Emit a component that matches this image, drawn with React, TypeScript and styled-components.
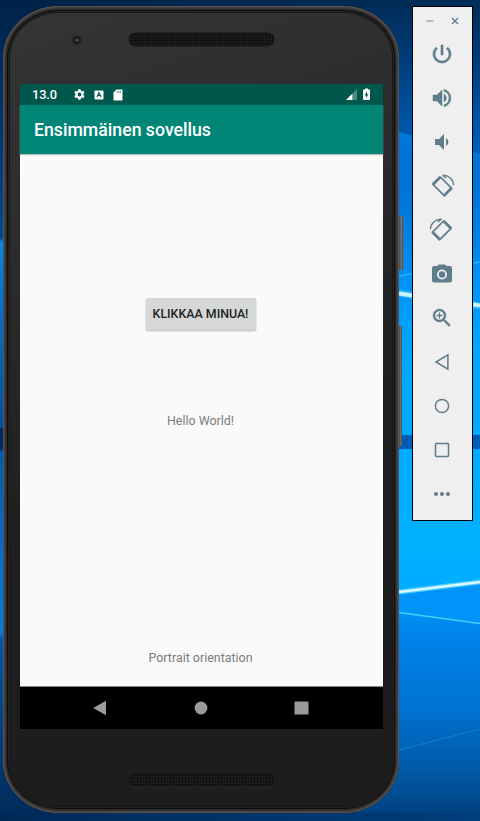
import React from "react";
import styled, { createGlobalStyle } from "styled-components";

const GlobalStyle = createGlobalStyle`
  * { box-sizing: border-box; }
  body { margin: 0; overflow: hidden; background: #0078d7; font-family: Roboto, "Noto Sans", sans-serif; }
`;

const Desktop = styled.main`
  position: relative;
  display: flex;
  align-items: flex-start;
  width: 480px;
  height: 821px;
  padding: 6px 7px 0 3px;
  overflow: hidden;
`;

const Wallpaper = styled.svg`
  position: absolute;
  inset: 0;
`;

const Phone = styled.section`
  position: relative;
  display: flex;
  flex: none;
  flex-direction: column;
  width: 396px;
  height: 807px;
  padding: 0 16px 0 17px;
  border-radius: 56px / 52px;
  background: linear-gradient(160deg, #353536 0%, #2b2b2b 28%, #1e1e1e 58%, #1d1d1d 100%);
  box-shadow:
    inset 0 0 0 1px #575152,
    inset 0 0 0 2px #454040,
    inset 0 0 0 3px #393535,
    inset 0 0 0 4px #2a2828,
    inset 0 0 0 5px #0d0d0d,
    inset 0 0 0 6px #252525,
    inset 0 0 0 7px #181818;
`;

const SideKey = styled.span<{ $top: number; $height: number; $width: number }>`
  position: absolute;
  left: 396px;
  top: ${(p) => p.$top}px;
  width: ${(p) => p.$width}px;
  height: ${(p) => p.$height}px;
  background: linear-gradient(90deg, #4e4848, #777171 65%, #494545);
`;

const Bezel = styled.div<{ $height: number }>`
  position: relative;
  display: flex;
  flex: none;
  justify-content: center;
  height: ${(p) => p.$height}px;
`;

const Speaker = styled.span<{ $top: number }>`
  width: 145px;
  height: 13px;
  margin: ${(p) => p.$top}px 1px 0 0;
  border-radius: 7px;
  background: radial-gradient(circle, #080808 0.8px, transparent 1.1px) 1px 0 / 3px 3px, #1b1b1b;
  box-shadow: 0 0 0 0.5px #151515, 0.5px 1px 0 #353535;
`;

const Camera = styled.span`
  position: absolute;
  left: 49px;
  top: 26px;
  width: 15px;
  height: 15px;
  border-radius: 50%;
  background: radial-gradient(circle at 53% 54%, #6a5662 0 0.6px, #2a222a 1.6px, #191719 3.6px, #303031 5px, #303031 7px);
`;

const Screen = styled.div`
  display: flex;
  flex: none;
  flex-direction: column;
  height: 645px;
  background: #fafafa;
`;

const StatusBar = styled.div`
  display: flex;
  align-items: center;
  height: 21px;
  padding: 0 13px 0 12px;
  background: #00574b;
  color: #fff;
`;

const Clock = styled.span`
  width: 41px;
  font-size: 12.8px;
  font-weight: 500;
  line-height: 21px;
  letter-spacing: -0.1px;
`;

const StatusIcons = styled.div<{ $gap: number; $end?: boolean }>`
  display: flex;
  align-items: center;
  gap: ${(p) => p.$gap}px;
  margin-left: ${(p) => (p.$end ? "auto" : "0")};
`;

const AppBar = styled.header`
  z-index: 1;
  height: 49px;
  padding-left: 14px;
  background: #008577;
  color: #fff;
  font-size: 17.7px;
  font-weight: 500;
  line-height: 51px;
  box-shadow: 0 1px 1px #aebfbd;
`;

const Content = styled.div`
  display: flex;
  flex: 1;
  flex-direction: column;
  align-items: center;
  padding: 144px 2px 0 0;
  border-bottom: 1px solid #858585;
`;

const PushButton = styled.button`
  flex: none;
  width: 110px;
  height: 32px;
  padding: 0;
  border: 0;
  border-radius: 2px;
  background: #d6d7d7;
  box-shadow: 0 1px 2px rgba(0, 0, 0, 0.28);
  color: #222;
  font: 500 12.4px/32px Roboto, sans-serif;
  white-space: nowrap;
`;

const Label = styled.p<{ $gap: number }>`
  margin: ${(p) => p.$gap}px 0 0;
  color: #7c7c7c;
  font-size: 12.45px;
  line-height: 16px;
  white-space: nowrap;
`;

const NavBar = styled.nav`
  display: flex;
  flex: none;
  align-items: center;
  justify-content: space-between;
  height: 42px;
  padding: 0 74px 0 72px;
  background: #000;
`;

const Toolbar = styled.aside`
  position: relative;
  display: flex;
  flex: none;
  flex-direction: column;
  align-items: center;
  width: 61px;
  height: 515px;
  margin-left: 13px;
  border: 1px solid #000;
  background: #efefef;
  color: #607d8b;
`;

const WindowControls = styled.div`
  display: flex;
  flex: none;
  align-items: center;
  justify-content: center;
  gap: 15px;
  width: 100%;
  height: 25px;
  padding: 3px 0 0 0;
`;

const Tool = styled.div`
  display: grid;
  flex: none;
  place-items: center;
  width: 45px;
  height: 44px;
  margin-right: 2px;
`;

const Glyph = styled.svg`
  display: block;
  overflow: visible;
`;

const rotate = (
  <>
    <path fillRule="evenodd" d="M8.4 1.9 1.9 8.4Q.9 9.5 1.9 10.5L13 21.7Q14 22.6 15.1 21.6L21.6 15.1Q22.6 14 21.6 13L10.5 1.9Q9.5 .9 8.4 1.9zM10.3 4.1 19.4 13.3 13.3 19.4 4.1 10.3z" />
    <path d="M12 .7C18 .3 23 5 23.1 10.8M12 .7 15.6 3.4" fill="none" stroke="currentColor" strokeWidth="1.4" />
  </>
);

const tools: { name: string; shape: React.ReactNode }[] = [
  { name: "Power", shape: <path d="M13 3h-2v10h2V3zm4.83 2.17-1.42 1.42A6.92 6.92 0 0 1 19 12a7 7 0 1 1-11.42-5.42L6.17 5.17A9 9 0 1 0 21 12c0-2.74-1.23-5.18-3.17-6.83z" stroke="currentColor" strokeWidth=".6" /> },
  { name: "Volume up", shape: <path d="M3 9v6h4l5 5V4L7 9H3zm13.5 3A4.5 4.5 0 0 0 14 7.97v8.05A4.5 4.5 0 0 0 16.5 12zM14 3.23v2.06a7 7 0 0 1 0 13.42v2.06a9 9 0 0 0 0-17.54z" stroke="currentColor" strokeWidth=".5" /> },
  { name: "Volume down", shape: <path d="M18.5 12A4.5 4.5 0 0 0 16 7.97v8.05A4.5 4.5 0 0 0 18.5 12zM5 9v6h4l5 5V4L9 9H5z" /> },
  { name: "Rotate left", shape: <g transform="translate(0.5 0.5)">{rotate}</g> },
  { name: "Rotate right", shape: <g transform="matrix(-1 0 0 1 23.5 0.5)">{rotate}</g> },
  { name: "Screenshot", shape: <path fillRule="evenodd" d="M9 2.5 7.17 4H4a2 2 0 0 0-2 2v12.5a2 2 0 0 0 2 2h16a2 2 0 0 0 2-2V6a2 2 0 0 0-2-2h-3.17L15 2.5H9zm3 15a5 5 0 1 1 0-10 5 5 0 0 1 0 10zm0-1.8a3.2 3.2 0 1 0 0-6.4 3.2 3.2 0 0 0 0 6.4z" /> },
  { name: "Zoom", shape: <path d="m15.5 14h-.79l-.28-.27A6.5 6.5 0 1 0 13.73 14.43l.27.28v.79l5 4.99L20.49 19l-4.99-5zm-6 0a4.5 4.5 0 1 1 0-9 4.5 4.5 0 0 1 0 9zm2.8-4H10v2.3H9V10H6.7V9H9V6.7h1V9h2.3v1z" stroke="currentColor" strokeWidth=".35" /> },
  { name: "Back", shape: <path d="M17.9 4.9v14.2L6 12z" fill="none" stroke="currentColor" strokeWidth="1.5" /> },
  { name: "Home", shape: <circle cx="12" cy="12" r="6.6" fill="none" stroke="currentColor" strokeWidth="1.5" /> },
  { name: "Overview", shape: <rect x="5.5" y="5.5" width="13" height="13" rx=".7" fill="none" stroke="currentColor" strokeWidth="1.5" /> },
  { name: "More", shape: <path d="M6 10a2 2 0 1 0 0 4 2 2 0 0 0 0-4zm6 0a2 2 0 1 0 0 4 2 2 0 0 0 0-4zm6 0a2 2 0 1 0 0 4 2 2 0 0 0 0-4z" /> },
];

function Background() {
  return (
    <Wallpaper width="480" height="821" viewBox="0 0 480 821">
      <defs>
        <linearGradient id="right" x1="0" y1="0" x2="0" y2="1">
          <stop offset="0" stopColor="#002b55" />
          <stop offset=".07" stopColor="#003b78" />
          <stop offset=".16" stopColor="#0058ad" />
          <stop offset=".25" stopColor="#0075d8" />
          <stop offset=".34" stopColor="#0093f4" />
          <stop offset=".42" stopColor="#00a5ff" />
          <stop offset=".66" stopColor="#00b0ff" />
          <stop offset=".72" stopColor="#00acff" />
          <stop offset=".755" stopColor="#008bf0" />
          <stop offset=".8" stopColor="#007de2" />
          <stop offset=".86" stopColor="#0074d4" />
          <stop offset=".94" stopColor="#0059a5" />
          <stop offset="1" stopColor="#003d79" />
        </linearGradient>
        <linearGradient id="left" x1="0" y1="0" x2="0" y2="1">
          <stop offset="0" stopColor="#002248" />
          <stop offset=".16" stopColor="#003570" />
          <stop offset=".29" stopColor="#004a91" />
          <stop offset=".295" stopColor="#0088ee" />
          <stop offset=".38" stopColor="#0070cc" />
          <stop offset=".52" stopColor="#00529c" />
          <stop offset=".522" stopColor="#002c59" />
          <stop offset=".547" stopColor="#002c59" />
          <stop offset=".55" stopColor="#005bb3" />
          <stop offset=".77" stopColor="#007ee4" />
          <stop offset=".78" stopColor="#0059a9" />
          <stop offset=".9" stopColor="#003d7b" />
          <stop offset="1" stopColor="#002a58" />
        </linearGradient>
        <linearGradient id="top" x1="0" y1="0" x2="1" y2="0">
          <stop offset="0" stopColor="#002248" />
          <stop offset="1" stopColor="#002d5a" />
        </linearGradient>
        <linearGradient id="edge" x1="0" y1="0" x2="1" y2="0">
          <stop offset="0" stopColor="#002956" />
          <stop offset="1" stopColor="#003e7c" />
        </linearGradient>
        <linearGradient id="ray" x1="0" y1="0" x2="0" y2="1">
          <stop offset="0" stopColor="#0080e8" stopOpacity=".8" />
          <stop offset="1" stopColor="#0080e8" stopOpacity="0" />
        </linearGradient>
      </defs>
      <path fill="url(#right)" d="M0 0h480v821H0z" />
      <path fill="url(#left)" d="M0 0h200v821H0z" />
      <path fill="url(#top)" d="M0 0h480v8H0z" />
      <path fill="url(#edge)" d="M0 812h480v9H0z" />
      <path fill="url(#ray)" d="m399 132 81 22v86h-81z" />
      <path stroke="#1caaff" strokeWidth="2" d="m399 276 81-14" />
      <path stroke="#50caff" strokeWidth="7" opacity=".5" d="m399 293 81 13" />
      <path stroke="#c4f5ff" strokeWidth="4" d="m399 293.5 81 12" />
      <path fill="#005db5" d="M399 435h81v14h-81z" />
      <path fill="#0094f8" d="m399 594 81-10v40l-81-11z" />
      <path stroke="#4bcbff" strokeWidth="5" d="m399 592 81-10" />
      <path stroke="#d7fbff" strokeWidth="2.5" d="m399 592 81-10" />
      <path stroke="#42cfff" strokeWidth="1.5" d="m399 612.5 81 11" />
      <path stroke="#1380d2" strokeWidth="1" d="m399 750 81-21" />
    </Wallpaper>
  );
}

export default function App() {
  return (
    <>
      <GlobalStyle />
      <Desktop>
        <Background />
        <Phone>
          <SideKey $top={210} $height={54} $width={4} />
          <SideKey $top={320} $height={120} $width={3} />
          <Bezel $height={78}>
            <Camera />
            <Speaker $top={27} />
          </Bezel>
          <Screen>
            <StatusBar>
              <Clock>13.0</Clock>
              <StatusIcons $gap={8}>
                <Glyph width="13" height="13" viewBox="1 1 22 22" fill="currentColor">
                  <path fillRule="evenodd" d="M19.4 13a8 8 0 0 0 0-2l2.1-1.7-2-3.5-2.5 1a8 8 0 0 0-1.7-1L15 3.1h-4l-.6 2.7-1.7 1-2.5-1-2 3.5L6.4 11a8 8 0 0 0 0 2l-2.2 1.7 2 3.5 2.5-1 1.7 1 .6 2.7h4l.3-2.7 1.7-1 2.5 1 2-3.5zM13 15.2a3.2 3.2 0 1 1 0-6.4 3.2 3.2 0 0 1 0 6.4z" transform="translate(-1 0)" />
                </Glyph>
                <Glyph width="10" height="10" viewBox="0 0 10 10">
                  <rect x=".5" y=".5" width="9" height="9" rx="1" fill="#fff" />
                  <path d="m3 7 2-4.5L7 7M3.8 5.5h2.4" fill="none" stroke="#00574b" strokeWidth="1.1" />
                </Glyph>
                <Glyph width="12" height="12" viewBox="0 0 12 12">
                  <path fill="#fff" d="M4.5.5h5.2q.8 0 .8.8v9.4q0 .8-.8.8H2.3q-.8 0-.8-.8V3.5z" />
                  <path stroke="#00574b" strokeWidth=".7" d="M5 2v1.7M6.7 2v1.7M8.4 2v1.7" />
                </Glyph>
              </StatusIcons>
              <StatusIcons $gap={6} $end>
                <Glyph width="11" height="11" viewBox="0 0 11 11">
                  <path fill="#4e8c83" d="M11 0v11H0z" />
                  <path fill="#fff" d="M6.3 4.7V11H0z" />
                </Glyph>
                <Glyph width="7" height="12" viewBox="0 .8 7 12">
                  <path fill="#fff" d="M2 .3h3v1h1.2q.8 0 .8.8v8.8q0 .8-.8.8H.8q-.8 0-.8-.8V2.1q0-.8.8-.8H2z" />
                  <path fill="#00574b" d="M4 3 1.7 7h1.5v3l2.2-4H4z" />
                </Glyph>
              </StatusIcons>
            </StatusBar>
            <AppBar>Ensimmäinen sovellus</AppBar>
            <Content>
              <PushButton>KLIKKAA MINUA!</PushButton>
              <Label $gap={83}>Hello World!</Label>
              <Label $gap={221}>Portrait orientation</Label>
            </Content>
            <NavBar>
              <Glyph width="15" height="16" viewBox="0 0 15 16"><path fill="#9b9b9b" d="M14 .7v14.6L1.2 8z" /></Glyph>
              <Glyph width="14" height="14" viewBox="0 0 14 14"><circle cx="7" cy="7" r="6.4" fill="#9b9b9b" /></Glyph>
              <Glyph width="15" height="14" viewBox="0 0 15 14"><rect x=".5" y=".5" width="14" height="13" rx=".6" fill="#9b9b9b" /></Glyph>
            </NavBar>
          </Screen>
          <Bezel $height={84}>
            <Speaker $top={45} />
          </Bezel>
        </Phone>
        <Toolbar>
          <WindowControls>
            <Glyph width="10" height="10" viewBox="0 0 10 10"><path stroke="#9db0b9" strokeWidth="1.6" d="M1.5 5h7" /></Glyph>
            <Glyph width="10" height="10" viewBox="0 0 10 10"><path stroke="#607d8b" strokeWidth="1.4" d="m2 2 6 6m0-6-6 6" /></Glyph>
          </WindowControls>
          {tools.map((tool) => (
            <Tool key={tool.name}>
              <Glyph width="24" height="24" viewBox="0 0 24 24" fill="currentColor">{tool.shape}</Glyph>
            </Tool>
          ))}
        </Toolbar>
      </Desktop>
    </>
  );
}
